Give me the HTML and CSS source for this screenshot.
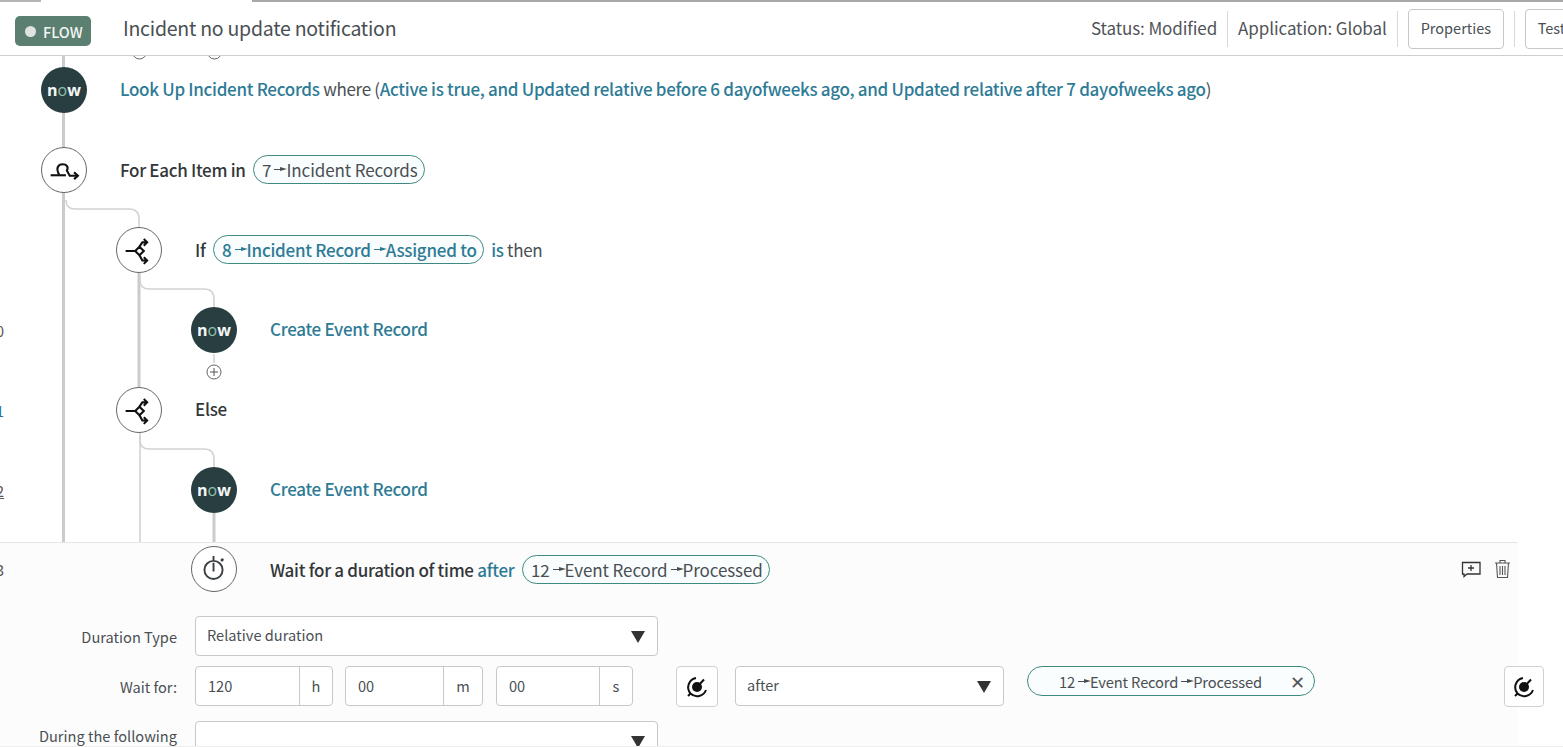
FILE: index.html
```html
<!DOCTYPE html>
<html lang="en">
<head>
<meta charset="utf-8">
<title>Incident no update notification</title>
<link rel="stylesheet" href="styles.css">
</head>
<body>
<div class="tabline"><span class="tab-a"></span><span class="tab-gap"></span><span class="tab-b"></span></div>
<header class="header">
  <div class="badge"><span class="badge-dot"></span>FLOW</div>
  <h1 class="title">Incident no update notification</h1>
  <div class="meta">Status: Modified</div>
  <span class="sep"></span>
  <div class="meta">Application: Global</div>
  <span class="sep"></span>
  <button class="btn btn-props">Properties</button>
  <span class="sep"></span>
  <button class="btn btn-test">Test</button>
</header>

<main class="canvas">
  <svg class="wires" viewBox="0 56 1563 486" width="1563" height="486">
    <g fill="none" stroke="#cbcbcb" stroke-width="3">
      <path d="M63.5 50V542"/>
      <path d="M139 273V387"/>
      <path d="M214 513V542"/>
    </g>
    <g fill="none" stroke="#d2d2d2" stroke-width="1.600">
      <path d="M66 200q0 9 9 9H129q10 0 10 10V227"/>
      <path d="M140 276v4q0 9 9 9H204q10 0 10 10V307"/>
      <path d="M214 354v9"/>
      <path d="M140 433V542"/>
      <path d="M140 436v4q0 9 9 9H204q10 0 10 10V467"/>
    </g>
    <g fill="#fff" stroke="#666" stroke-width="1">
      <circle cx="139.500" cy="52" r="7"/>
      <circle cx="214.500" cy="52" r="7"/>
      <circle cx="214" cy="372" r="7"/>
    </g>
    <path d="M214 368v8M210 372h8" stroke="#555" stroke-width="1" fill="none"/>
  </svg>
  <div class="rows">
    <div class="row">
      <span class="gutter"></span>
      <div class="node now lvl0"><span class="logo">n<b>o</b>w</span></div>
      <p class="line"><a class="link">Look Up Incident Records</a> where (<a class="link">Active is true, and Updated relative before 6 dayofweeks ago, and Updated relative after 7 dayofweeks ago</a>)</p>
    </div>
    <div class="row">
      <span class="gutter"></span>
      <div class="node lvl0">
        <svg width="46" height="46" viewBox="41 147 46 46" fill="none" stroke="#111" stroke-width="2.200"><path d="M50 175.500H66"/><path d="M59 175C55 168 58 164 62.500 164C67 164 69 167 67 170.500L70 176H78"/><path d="M74.500 172.500L78.500 176L74.500 179.500"/></svg>
      </div>
      <p class="line line-pill"><strong>For Each Item in</strong> <span class="pill pill-plain">7<i class="arrow"></i>Incident Records</span></p>
    </div>
    <div class="row">
      <span class="gutter"></span>
      <div class="node lvl1">
        <svg width="46" height="46" viewBox="116 227 46 46" fill="none" stroke="#111" stroke-width="2.200"><path d="M125 251h10M135 251l4.500-4.500 4.500 4.500-4.500 4.500z"/><path d="M139.500 246.500l3-4.500h5M144 238.500l3.500 3.500-3.500 3.500M139.500 255.500l3 5.500h5M144 257.500l3.500 3.500-3.500 3.500"/></svg>
      </div>
      <p class="line line-pill"><strong>If</strong> <span class="pill pill-link">8<i class="arrow"></i>Incident Record<i class="arrow"></i>Assigned to</span> <a class="link">is</a> then</p>
    </div>
    <div class="row">
      <span class="gutter num">10</span>
      <div class="node now lvl2"><span class="logo">n<b>o</b>w</span></div>
      <p class="line"><a class="link">Create Event Record</a></p>
    </div>
    <div class="row">
      <span class="gutter num num-link">11</span>
      <div class="node lvl1">
        <svg width="46" height="46" viewBox="116 227 46 46" fill="none" stroke="#111" stroke-width="2.200"><path d="M125 251h10M135 251l4.500-4.500 4.500 4.500-4.500 4.500z"/><path d="M139.500 246.500l3-4.500h5M144 238.500l3.500 3.500-3.500 3.500M139.500 255.500l3 5.500h5M144 257.500l3.500 3.500-3.500 3.500"/></svg>
      </div>
      <p class="line"><strong>Else</strong></p>
    </div>
    <div class="row">
      <span class="gutter num num-under">12</span>
      <div class="node now lvl2"><span class="logo">n<b>o</b>w</span></div>
      <p class="line"><a class="link">Create Event Record</a></p>
    </div>
  </div>
</main>

<section class="panel">
  <div class="row panel-head">
    <span class="gutter num">13</span>
    <div class="node lvl2">
      <svg width="46" height="46" viewBox="191 547 46 46" fill="none" stroke="#3a3f44" stroke-width="2"><circle cx="213.500" cy="571" r="9.500"/><path d="M213.500 556.500v4M213.500 563.500v9"/><path d="M221.500 559.500l2 2" stroke-width="3"/></svg>
    </div>
    <p class="line line-pill line-wait"><strong>Wait for a duration of time</strong> <a class="link">after</a> <span class="pill pill-plain">12<i class="arrow"></i>Event Record<i class="arrow"></i>Processed</span></p>
    <div class="head-actions">
      <svg width="20" height="18" viewBox="0 0 20 18" fill="none" stroke="#333" stroke-width="1.300"><path d="M1.500 2.500h17.500v11.500H6l-3 2.500v-2.500h-1.500z"/><path d="M10 5v6M7 8h6"/></svg>
      <svg width="17" height="20" viewBox="0 0 17 20" fill="none" stroke="#555" stroke-width="1.100"><path d="M1 4h15M6 4V1.500h5V4M2.500 4l1 14.500h10l1-14.500M6 7v9M8.500 7v9M11 7v9"/></svg>
    </div>
  </div>
  <div class="form-row">
    <label class="label">Duration Type</label>
    <div class="select select-wide">Relative duration<span class="caret"></span></div>
  </div>
  <div class="form-row form-row-wait">
    <label class="label">Wait for:</label>
    <div class="group group-h"><span class="value">120</span><span class="addon">h</span></div>
    <div class="group group-m"><span class="value">00</span><span class="addon addon-m">m</span></div>
    <div class="group group-s"><span class="value">00</span><span class="addon">s</span></div>
    <button class="icon-btn icon-btn-a">
      <svg width="24" height="24" viewBox="0 0 24 24" fill="none" stroke="#111" stroke-width="2"><circle cx="12" cy="12" r="5" fill="#111" stroke="none"/><path d="M13 11l6-6.500" /><path d="M11 3a9.500 9.500 0 0 0-5.500 15.500A9.500 9.500 0 0 0 21 15"/><path d="M6 18l-3 3"/></svg>
    </button>
    <div class="select select-after">after<span class="caret"></span></div>
    <span class="pill pill-field">12<i class="arrow"></i>Event Record<i class="arrow"></i>Processed<span class="close">✕</span></span>
    <button class="icon-btn icon-btn-b">
      <svg width="24" height="24" viewBox="0 0 24 24" fill="none" stroke="#111" stroke-width="2"><circle cx="12" cy="12" r="5" fill="#111" stroke="none"/><path d="M13 11l6-6.500" /><path d="M11 3a9.500 9.500 0 0 0-5.500 15.500A9.500 9.500 0 0 0 21 15"/><path d="M6 18l-3 3"/></svg>
    </button>
  </div>
  <div class="form-row form-row-last">
    <label class="label">During the following</label>
    <div class="select select-wide select-cut"><span class="caret"></span></div>
  </div>
</section>
<div class="foot"></div>
</body>
</html>
```

FILE: styles.css
```css
* { box-sizing: border-box; }
html, body { margin: 0; padding: 0; }
body {
  width: 1563px;
  height: 747px;
  overflow: hidden;
  background: #fff;
  color: #4a4f54;
  font-family: "Noto Sans CJK SC", "Noto Sans", sans-serif;
  font-size: 17px;
}
p, h1 { margin: 0; font-weight: 400; }

/* top strip */
.tabline { display: flex; height: 2px; }
.tab-a { width: 41px; background: #b5b5b5; }
.tab-gap { width: 211px; }
.tab-b { flex: 1; background: #a8a8a8; }

/* header */
.header {
  display: flex;
  align-items: center;
  height: 54px;
  border-bottom: 1px solid #cfcfcf;
  white-space: nowrap;
  overflow: hidden;
}
.badge {
  display: flex;
  align-items: center;
  flex: none;
  width: 76px;
  height: 30px;
  margin: 5px 0 0 15px;
  padding-left: 10px;
  border-radius: 5px;
  background: #5b8071;
  color: #f2f5f4;
  font-size: 14.500px;
  font-weight: 500;
}
.badge-dot {
  width: 11px;
  height: 11px;
  margin-right: 7px;
  border-radius: 50%;
  background: #dfe3e1;
}
.title {
  flex: none;
  width: 968px;
  margin: -2px 0 0 32px;
  font-size: 19.500px;
  letter-spacing: -0.250px;
  color: #4a4f54;
}
.meta { flex: none; margin-top: -2px; font-size: 17px; letter-spacing: -0.100px; color: #4f5357; }
.sep { flex: none; width: 1px; height: 36px; margin: 0 10px; background: #d8d8d8; }
.btn {
  flex: none;
  height: 40px;
  padding: 0 0 2px;
  border: 1px solid #c8c8c8;
  border-radius: 4px;
  background: #fff;
  color: #4a4f54;
  font: 14.500px "Noto Sans CJK SC", "Noto Sans", sans-serif;
  text-align: left;
}
.btn-props { width: 96px; padding-left: 12px; }
.btn-test { width: 60px; padding-left: 12px; }

/* canvas */
.canvas { position: relative; height: 486px; overflow: hidden; }
.wires { position: absolute; left: 0; top: 0; }
.rows { position: relative; margin-top: -6px; }
.row { display: flex; align-items: center; height: 80px; }
.gutter {
  display: flex;
  justify-content: flex-end;
  flex: none;
  width: 4px;
  overflow: hidden;
  font-size: 15px;
}
.num { color: #555; }
.num-link { color: #2f6f9a; }
.num-under { text-decoration: underline; }
.node {
  display: flex;
  align-items: center;
  justify-content: center;
  flex: none;
  width: 46px;
  height: 46px;
  margin-right: 33px;
  border: 1px solid #666;
  border-radius: 50%;
  background: #fff;
}
.lvl0 { margin-left: 37px; }
.lvl1 { margin-left: 112px; }
.lvl2 { margin-left: 187px; }
.now { border: none; background: #293e40; }
.logo {
  margin-top: -1px;
  color: #f4f6f5;
  font: 700 16px "Open Sans", sans-serif;
  letter-spacing: 0;
}
.logo b { color: #8fc0ad; font-weight: 400; }
.line {
  padding-bottom: 2px;
  font-size: 17px;
  letter-spacing: -0.300px;
  line-height: 30px;
  white-space: nowrap;
  color: #4a4f54;
}
.line-pill { padding-bottom: 0; }
.line-wait { padding-top: 2px; }
.link { color: #2e7b96; font-weight: 500; }
.line strong { color: #33373a; font-weight: 500; }

.pill {
  display: inline-flex;
  align-items: center;
  height: 29px;
  margin: 0 4px 0 4px;
  padding: 0 6px 0 8px;
  border: 1px solid #3f8a80;
  border-radius: 15px;
  background: #f9fdfd;
  color: #4a4f54;
  vertical-align: top;
}
.pill-plain { letter-spacing: -0.100px; }
.pill-link { color: #2e7b96; font-weight: 500; letter-spacing: -0.250px; }
.arrow {
  position: relative;
  flex: none;
  display: inline-block;
  width: 10px;
  height: 1px;
  margin: 0 2px 0 3px;
  background: currentColor;
}
.arrow::after {
  content: "";
  position: absolute;
  right: -3px;
  top: -2px;
  border-left: 7px solid currentColor;
  border-top: 2.500px solid transparent;
  border-bottom: 2.500px solid transparent;
}

/* panel */
.panel {
  width: 1518px;
  height: 204px;
  border-top: 1px solid #e6e6e6;
  background: #fcfcfc;
  clip-path: inset(0 -60px 0 0);
}
.panel-head { height: 52px; margin-bottom: 21px; }
.head-actions { display: flex; align-items: center; gap: 13px; margin-left: auto; margin-right: 7px; }
.form-row { display: flex; align-items: center; margin-bottom: 10px; font-size: 14.600px; }
.form-row-wait { align-items: flex-start; margin-bottom: 14px; }
.form-row-last { align-items: flex-start; }
.label { flex: none; width: 177px; margin-right: 18px; font-size: 14.600px; text-align: right; color: #4a4f54; }
.form-row-wait .label { line-height: 41px; }
.form-row-last .label { line-height: 30px; }
.select {
  position: relative;
  display: flex;
  align-items: center;
  flex: none;
  padding: 0 0 3px 11px;
  border: 1px solid #c8c8c8;
  border-radius: 4px;
  background: #fff;
  color: #4a4f54;
}
.select-wide { width: 463px; height: 40px; }
.select-after { width: 269px; height: 40px; margin-right: 23px; }
.select-cut { height: 50px; }
.caret {
  position: absolute;
  right: 12px;
  top: 14px;
  border-top: 12px solid #333;
  border-left: 7px solid transparent;
  border-right: 7px solid transparent;
}
.group {
  display: flex;
  flex: none;
  height: 40px;
  border: 1px solid #c8c8c8;
  border-radius: 4px;
  background: #fff;
}
.group-h { width: 138px; margin-right: 12px; }
.group-m { width: 138px; margin-right: 13px; }
.group-s { width: 137px; margin-right: 43px; }
.value { flex: 1; padding-left: 12px; line-height: 38px; }
.addon {
  flex: none;
  width: 33px;
  border-left: 1px solid #c8c8c8;
  line-height: 38px;
  text-align: center;
}
.addon-m { width: 39px; }
.icon-btn {
  display: flex;
  align-items: center;
  justify-content: center;
  flex: none;
  height: 41px;
  padding: 0;
  border: 1px solid #d0d0d0;
  border-radius: 4px;
  background: #fff;
}
.icon-btn-a { width: 42px; margin-right: 17px; }
.icon-btn-b { width: 40px; }
.pill-field {
  flex: none;
  justify-content: flex-start;
  width: 288px;
  height: 30px;
  margin: 0 189px 0 0;
  padding: 0 9px 0 31px;
  font-size: 14.700px;
  letter-spacing: -0.150px;
}
.close { margin-left: auto; font-size: 18px; line-height: 1; color: #555; }
.foot { height: 1px; background: #eee; }
```
